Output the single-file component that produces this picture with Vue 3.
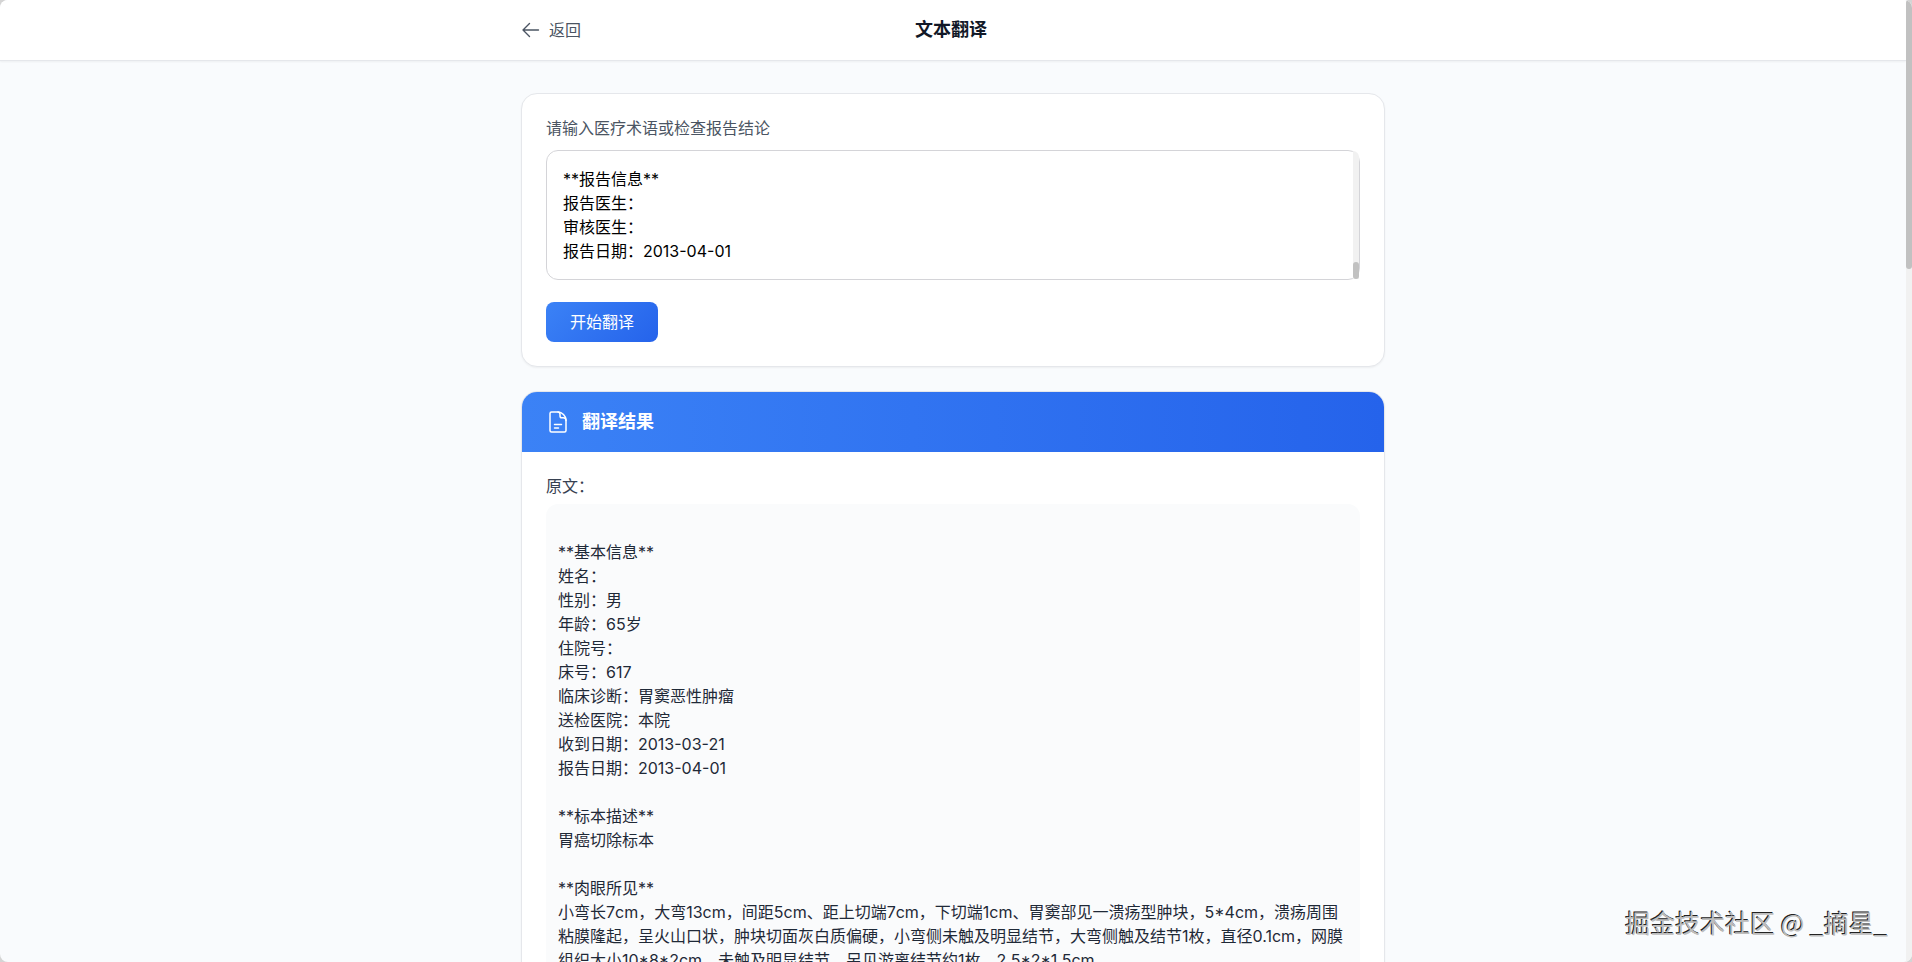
<script setup>
import { ref } from 'vue'

const input = ref(['**报告信息**', '报告医生：', '审核医生：', '报告日期：2013-04-01'].join('\n'))

const original = [
  '',
  '**基本信息**',
  '姓名：',
  '性别：男',
  '年龄：65岁',
  '住院号：',
  '床号：617',
  '临床诊断：胃窦恶性肿瘤',
  '送检医院：本院',
  '收到日期：2013-03-21',
  '报告日期：2013-04-01',
  '',
  '**标本描述**',
  '胃癌切除标本',
  '',
  '**肉眼所见**',
  '小弯长7cm，大弯13cm，间距5cm、距上切端7cm，下切端1cm、胃窦部见一溃疡型肿块，5*4cm，溃疡周围粘膜隆起，呈火山口状，肿块切面灰白质偏硬，小弯侧未触及明显结节，大弯侧触及结节1枚，直径0.1cm，网膜组织大小10*8*2cm，未触及明显结节，另见游离结节约1枚，2.5*2*1.5cm。',
].join('\n')
</script>

<template>
  <div class="window">
    <div class="page">
      <header class="topbar">
        <div class="container topbar-inner">
          <button type="button" class="back">
            <svg width="20" height="20" viewBox="0 0 20 20" fill="none" stroke="currentColor" stroke-width="1.4" stroke-linecap="round" stroke-linejoin="round" aria-hidden="true">
              <path d="M17.500 10H2M8.500 3.500L2 10l6.500 6.500" />
            </svg>
            <span>返回</span>
          </button>
          <h1>文本翻译</h1>
          <div class="spacer"></div>
        </div>
      </header>

      <main class="container content">
        <section class="card form-card">
          <label for="source">请输入医疗术语或检查报告结论</label>
          <div class="field">
            <textarea id="source" v-model="input" rows="4"></textarea>
            <div class="field-track"><div class="field-thumb"></div></div>
          </div>
          <button type="button" class="submit">开始翻译</button>
        </section>

        <section class="card">
          <div class="card-head">
            <svg width="24" height="24" viewBox="0 0 24 24" fill="none" stroke="currentColor" stroke-width="1.5" stroke-linecap="round" stroke-linejoin="round" aria-hidden="true">
              <path d="M12 2H5.500A1.500 1.500 0 0 0 4 3.500v17A1.500 1.500 0 0 0 5.500 22h13a1.500 1.500 0 0 0 1.500-1.500V10c0-4-4-8-8-8z" />
              <path d="M12 2c1.300 0 2 1 2 2.300V6c0 1.100.7 1.800 1.800 1.800h1.400C19 7.800 20 9 20 10.500" />
              <path d="M8.500 14.500h7M8.500 18h4" />
            </svg>
            <h2>翻译结果</h2>
          </div>
          <div class="card-body">
            <h3>原文：</h3>
            <div class="original">{{ original }}</div>
          </div>
        </section>
      </main>
    </div>
    <div class="page-track"><div class="page-thumb"></div></div>
    <div class="watermark">掘金技术社区 @ _摘星_</div>
  </div>
</template>

<style>
body {
  background: #d4d4d4;
}
</style>

<style scoped>
* {
  box-sizing: border-box;
}

.window {
  position: relative;
  display: flex;
  height: 100vh;
  overflow: hidden;
  border-radius: 8px;
  background: #f9fbfd;
  color: #1f2937;
  font-family: Inter, "Noto Sans CJK SC", sans-serif;
  font-size: 16px;
  font-weight: 400;
  line-height: 24px;
}

.page {
  flex: 1;
  min-width: 0;
  overflow: hidden;
}

.container {
  max-width: 896px;
  margin: 0 auto;
  padding: 0 16px;
}

.topbar {
  background: #fff;
  border-bottom: 1px solid #e5e7eb;
  box-shadow: 0 1px 2px rgba(0, 0, 0, 0.05);
}

.topbar-inner {
  display: flex;
  align-items: center;
  justify-content: space-between;
  height: 60px;
}

button {
  border: 0;
  font: inherit;
  cursor: pointer;
}

.back {
  display: flex;
  align-items: center;
  gap: 8px;
  padding: 0;
  background: none;
  color: #4b5563;
}

h1,
h2,
h3 {
  margin: 0;
}

h1 {
  color: #111827;
  font-size: 18px;
  font-weight: 700;
  line-height: 28px;
}

.spacer {
  width: 64px;
}

.content {
  display: flex;
  flex-direction: column;
  gap: 24px;
  padding-top: 32px;
}

.card {
  overflow: hidden;
  background: #fff;
  border: 1px solid #e5e7eb;
  border-radius: 16px;
  box-shadow: 0 1px 2px rgba(0, 0, 0, 0.05);
}

.form-card {
  padding: 24px;
}

label {
  display: block;
  margin-bottom: 12px;
  color: #4b5563;
  line-height: 20px;
}

.field {
  position: relative;
  margin-bottom: 22px;
}

textarea {
  display: block;
  width: 100%;
  padding: 16px;
  overflow: hidden;
  resize: none;
  border: 1px solid #d4d4d8;
  border-radius: 12px;
  background: #fff;
  color: #000;
  font: inherit;
}

.field-track {
  position: absolute;
  top: 1px;
  right: 1px;
  bottom: 1px;
  display: flex;
  align-items: flex-end;
  width: 6px;
  border-top-right-radius: 6px;
  background: #f1f1f1;
}

.field-thumb {
  width: 100%;
  height: 17px;
  border-radius: 3px;
  background: #c1c1c1;
}

.submit {
  display: block;
  height: 40px;
  padding: 0 24px;
  border-radius: 8px;
  background: linear-gradient(135deg, #3b82f6, #2563eb);
  color: #fff;
}

.card-head {
  display: flex;
  align-items: center;
  gap: 12px;
  padding: 16px 24px;
  background: linear-gradient(90deg, #3b82f6, #2563eb);
  color: #fff;
}

h2 {
  font-size: 18px;
  font-weight: 700;
  line-height: 28px;
}

.card-body {
  padding: 24px;
}

h3 {
  margin-bottom: 8px;
  color: #374151;
  font-size: 16px;
  font-weight: 400;
  line-height: 20px;
}

.original {
  padding: 12px;
  border-radius: 12px;
  background: #fafbfc;
  white-space: pre-wrap;
}

.page-track {
  width: 6px;
  background: #f1f1f1;
}

.page-thumb {
  height: 28vh;
  border-radius: 3px;
  background: #c1c1c1;
}

.watermark {
  position: absolute;
  right: 24px;
  bottom: 22px;
  color: #bdbdbd;
  font-family: "Noto Sans CJK SC", sans-serif;
  font-size: 25px;
  font-weight: 400;
  line-height: 36px;
  text-shadow: -1px -1px 0 #222;
}
</style>
